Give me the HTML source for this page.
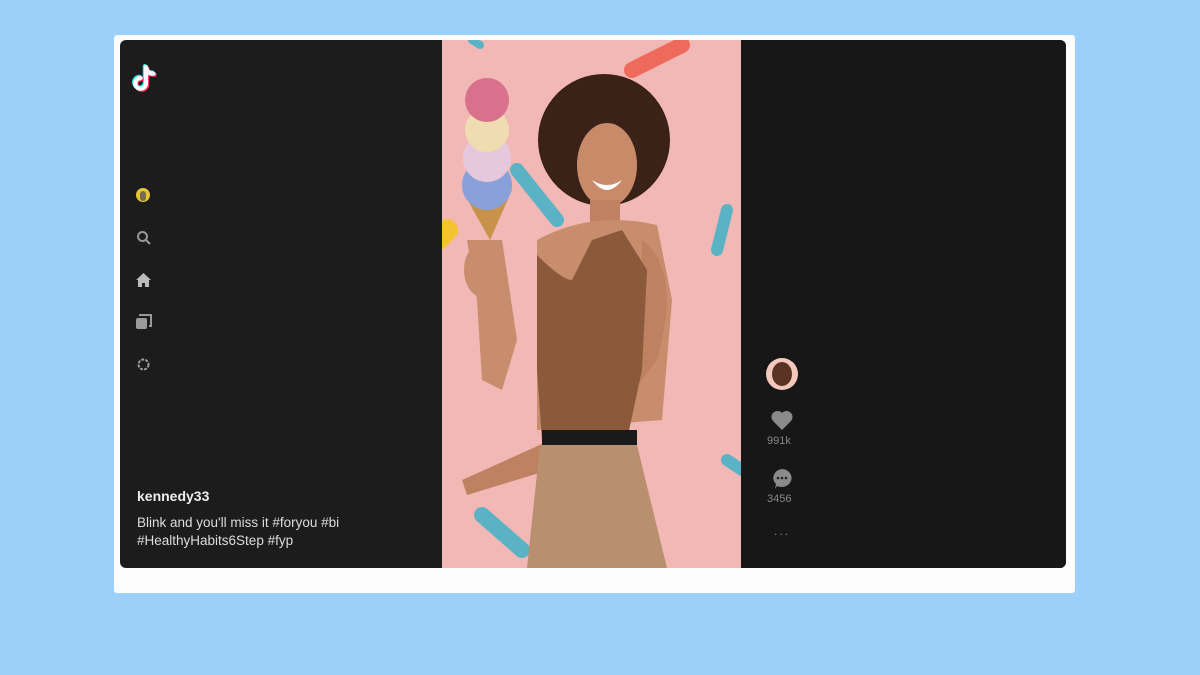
<!DOCTYPE html>
<html><head><meta charset="utf-8"><style>
*{margin:0;padding:0;box-sizing:border-box}
body{width:1200px;height:675px;background:#9ccffa;position:relative;overflow:hidden;font-family:"Liberation Sans",sans-serif}
.frame{position:absolute;left:114px;top:35px;width:961px;height:558px;background:#fdfdfd;border-radius:3px}
.panel{position:absolute;left:120px;top:40px;width:946px;height:528px;background:#1c1c1c;border-radius:6px;overflow:hidden}
.right{position:absolute;left:621px;top:0;width:325px;height:528px;background:#171717}
.video{position:absolute;left:322px;top:0;width:299px;height:528px;background:#f2b8b5;overflow:hidden}
.ic{position:absolute}
.txt{position:absolute;color:#eee}
</style></head><body>
<div class="frame"></div>
<div class="panel">
 <div class="right"></div>
 <div class="video">
  <svg width="299" height="528" viewBox="0 0 299 528">
   <g stroke-linecap="round" fill="none">
    <line x1="190" y1="30" x2="240" y2="5" stroke="#ee6b5b" stroke-width="16"/>
    <line x1="75" y1="130" x2="115" y2="180" stroke="#5ab3c4" stroke-width="14"/>
    <line x1="5" y1="190" x2="-5" y2="200" stroke="#f4c430" stroke-width="22"/>
    <line x1="285" y1="170" x2="275" y2="210" stroke="#5ab3c4" stroke-width="12"/>
    <line x1="40" y1="475" x2="80" y2="510" stroke="#5ab3c4" stroke-width="16"/>
    <line x1="285" y1="420" x2="300" y2="430" stroke="#5ab3c4" stroke-width="12"/>
    <line x1="30" y1="0" x2="38" y2="5" stroke="#5ab3c4" stroke-width="8"/>
   </g>
   <ellipse cx="162" cy="100" rx="66" ry="66" fill="#3a2218"/>
   <ellipse cx="165" cy="125" rx="30" ry="42" fill="#c98a6a"/>
   <path d="M150 140 Q165 160 180 140 Q165 150 150 140Z" fill="#fff"/>
   <rect x="148" y="160" width="30" height="30" fill="#c08062"/>
   <path d="M95 200 Q150 170 215 185 L230 260 L220 380 L95 390 Z" fill="#c88d6c"/>
   <path d="M25 200 L60 200 L75 300 L60 350 L40 340 L35 260 Z" fill="#c88d6c"/>
   <path d="M200 200 Q240 230 215 320 L140 420 L25 455 L20 440 L120 395 L200 300 Z" fill="#be8262"/>
   <path d="M95 215 Q120 240 130 240 L150 200 L180 190 L205 230 L200 330 L185 400 L100 400 L95 330 Z" fill="#8b5a3a"/>
   <rect x="100" y="390" width="95" height="15" fill="#1a1a1a"/>
   <path d="M98 405 L195 405 L225 528 L85 528 Z" fill="#b89070"/>
   <path d="M20 150 L70 150 L48 200 Z" fill="#c8924a"/>
   <circle cx="45" cy="145" r="25" fill="#8aa0d8"/>
   <circle cx="45" cy="118" r="24" fill="#e6c8dc"/>
   <circle cx="45" cy="90" r="22" fill="#efdcb0"/>
   <circle cx="45" cy="60" r="22" fill="#d9708c"/>
   <ellipse cx="42" cy="230" rx="20" ry="28" fill="#c88d6c"/>
  </svg>
 </div>
 <svg class="ic" style="left:12px;top:23px" width="28" height="30" viewBox="0 0 26 28">
  <g fill="none" stroke-width="4" stroke-linecap="round">
   <path d="M13 4 V19 A5 5 0 1 1 8 14" stroke="#25f4ee" transform="translate(-1,-1)"/>
   <path d="M13 4 Q14 10 20 10" stroke="#25f4ee" transform="translate(-1,-1)"/>
   <path d="M13 4 V19 A5 5 0 1 1 8 14" stroke="#fe2c55" transform="translate(1,1)"/>
   <path d="M13 4 Q14 10 20 10" stroke="#fe2c55" transform="translate(1,1)"/>
   <path d="M13 4 V19 A5 5 0 1 1 8 14" stroke="#fff"/>
   <path d="M13 4 Q14 10 20 10" stroke="#fff"/>
  </g>
 </svg>
 <div class="ic" style="left:16px;top:148px;width:14px;height:14px;border-radius:50%;background:#e3c635"><div style="margin:3px 0 0 4px;width:6px;height:10px;background:#7a6a55;border-radius:3px"></div></div>
 <svg class="ic" style="left:16px;top:190px" width="16" height="16" viewBox="0 0 16 16"><circle cx="6.5" cy="6.5" r="4.5" stroke="#999" stroke-width="2" fill="none"/><line x1="10" y1="10" x2="14" y2="14" stroke="#999" stroke-width="2"/></svg>
 <svg class="ic" style="left:16px;top:233px" width="15" height="14" viewBox="0 0 15 14"><path d="M7.5 0 L15 7 H13 V14 H9 V10 H6 V14 H2 V7 H0Z" fill="#bbb"/></svg>
 <svg class="ic" style="left:16px;top:274px" width="16" height="16" viewBox="0 0 16 16"><rect x="0" y="4" width="11" height="11" rx="2" fill="#999"/><path d="M4 2 V1 H15 V12 H13" stroke="#999" stroke-width="2" fill="none"/></svg>
 <svg class="ic" style="left:16px;top:317px" width="15" height="15" viewBox="0 0 15 15"><circle cx="7.5" cy="7.5" r="5" stroke="#999" stroke-width="2" fill="none" stroke-dasharray="3 1.2"/></svg>
 <div class="txt" style="left:17px;top:448px;font-size:14px;font-weight:bold">kennedy33</div>
 <div class="txt" style="left:17px;top:474px;font-size:13.5px;line-height:18px;color:#ddd">Blink and you'll miss it #foryou #bi<br>#HealthyHabits6Step #fyp</div>
 <div class="ic" style="left:646px;top:318px;width:32px;height:32px;border-radius:50%;background:#f4c9bd;overflow:hidden"><div style="margin:4px 0 0 6px;width:20px;height:24px;border-radius:50%;background:#5a3325"></div></div>
 <svg class="ic" style="left:651px;top:370px" width="22" height="20" viewBox="0 0 22 20"><path d="M11 20 L2 11 A5.5 5.5 0 0 1 11 3 A5.5 5.5 0 0 1 20 11Z" fill="#8a8a8a"/></svg>
 <div class="txt" style="left:647px;top:395px;font-size:11px;color:#888">991k</div>
 <svg class="ic" style="left:651px;top:428px" width="22" height="22" viewBox="0 0 22 22"><path d="M11 1 A10 9 0 1 1 6 18 L4 21 L5 16 A10 9 0 0 1 11 1Z" fill="#8a8a8a"/><circle cx="7" cy="10" r="1.3" fill="#222"/><circle cx="11" cy="10" r="1.3" fill="#222"/><circle cx="15" cy="10" r="1.3" fill="#222"/></svg>
 <div class="txt" style="left:647px;top:453px;font-size:11px;color:#888">3456</div>
 <div class="txt" style="left:654px;top:484px;font-size:12px;color:#888;letter-spacing:2px">...</div>
</div>
</body></html>
